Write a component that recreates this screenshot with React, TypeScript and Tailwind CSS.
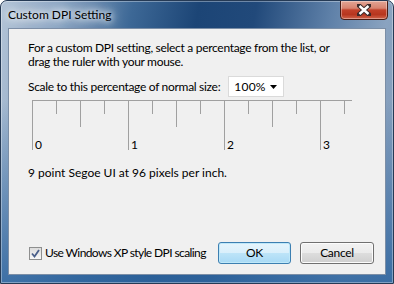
import React from "react";

const font = { fontFamily: 'Lato, "Noto Sans", sans-serif' };

function Ruler() {
  const ticks = Array.from({ length: 14 }, (_, i) => i);
  return (
    <svg width="330" height="52" className="block" style={font}>
      <line x1="0" y1="0.5" x2="320" y2="0.5" stroke="#a0a0a0" />
      {ticks.map((i) => {
        const x = 24 * i + 0.5;
        const h = i % 4 === 0 ? 50 : i % 4 === 2 ? 27 : 14;
        return <line key={i} x1={x} y1="0" x2={x} y2={h} stroke="#a0a0a0" />;
      })}
      {[0, 1, 2, 3].map((n) => (
        <text key={n} x={96 * n + 3} y="49" fontSize="12" fill="#000">
          {n}
        </text>
      ))}
    </svg>
  );
}

export default function App() {
  return (
    <div
      className="relative w-[394px] h-[284px] overflow-hidden rounded-t-[7px] border border-[#253a55] bg-[linear-gradient(to_bottom,rgba(47,102,160,0)_35%,rgba(47,102,160,0.85)_100%),linear-gradient(100deg,#b3c4d7_0%,#8ba5c3_14%,#3d6896_30%,#1c4576_45%,#21497a_58%,#5e80a8_75%,#8aa3c0_88%,#7e98b8_100%)]"
      style={font}
    >
      <div className="pointer-events-none absolute inset-0 rounded-t-[6px] border border-[rgba(255,255,255,0.35)]" />
      {/* title bar */}
      <div className="relative flex h-[27px] items-center pl-[7px]">
        <span className="relative whitespace-nowrap text-[12px] leading-none text-black [text-shadow:0_0_6px_#fff,0_0_10px_#fff,0_0_14px_#e8eef5]">
          Custom DPI Setting
        </span>
        {/* close button */}
        <div className="absolute right-[5px] top-[-1px] flex h-[20px] w-[48px] items-center justify-center rounded-b-[4px] border border-[#4a1c14] bg-[linear-gradient(to_bottom,#e3a595_0%,#d8836f_40%,#c2412a_50%,#b7361f_75%,#d0644b_100%)] shadow-[inset_0_0_0_1px_rgba(255,255,255,0.35)]">
          <svg width="14" height="12" viewBox="0 0 14 12">
            <path
              d="M2 1.5 L12 10.5 M12 1.5 L2 10.5"
              stroke="#3b2a2a"
              strokeWidth="4.5"
              strokeLinecap="square"
            />
            <path
              d="M2.5 2 L11.5 10 M11.5 2 L2.5 10"
              stroke="#fff"
              strokeWidth="2.4"
              strokeLinecap="butt"
            />
          </svg>
        </div>
      </div>
      {/* client */}
      <div className="ml-[7px] flex h-[247px] w-[378px] flex-col border border-[#7b8ea6] bg-[#f0f0f0] pl-[19px] pr-[11px] pt-[12px] pb-[10px] text-[12px] tracking-[-0.3px] text-black">
        <div className="whitespace-nowrap leading-[14px]">
          For a custom DPI setting, select a percentage from the list, or
          <br />
          drag the ruler with your mouse.
        </div>
        <div className="mt-[7px] flex h-[21px] items-center whitespace-nowrap">
          <span>Scale to this percentage of normal size:</span>
          <div className="ml-[8px] flex h-[21px] w-[56px] shrink-0 items-center border border-[#dadada] bg-white pl-[5px]">
            <span className="tracking-[0.2px]">100%</span>
            <svg width="7" height="4" className="ml-auto mr-[6px]">
              <path d="M0 0 L7 0 L3.5 4 Z" fill="#000" />
            </svg>
          </div>
        </div>
        <div className="ml-[4px] mt-[3px]">
          <Ruler />
        </div>
        <div className="mt-[14px] whitespace-nowrap leading-[14px] tracking-[0px]">
          9 point Segoe UI at 96 pixels per inch.
        </div>
        <div className="mt-auto flex items-center">
          <div className="flex items-center whitespace-nowrap">
            <div className="ml-[1px] flex h-[13px] w-[13px] shrink-0 items-center justify-center border border-[#8e8f8f] bg-[linear-gradient(to_bottom,#dcdcdc,#f8f8f8)]">
              <svg width="9" height="9" viewBox="0 0 9 9">
                <path d="M1 4.5 L3.5 7.5 L8 1" stroke="#4a5f8a" strokeWidth="1.8" fill="none" />
              </svg>
            </div>
            <span className="ml-[3px] tracking-[-0.6px]">Use Windows XP style DPI scaling</span>
          </div>
          <div className="ml-auto flex gap-[9px]">
            <button className="flex h-[22px] w-[73px] items-center justify-center rounded-[3px] border border-[#3c7fb1] bg-[linear-gradient(to_bottom,#e5f4fc_0%,#d9effb_50%,#bde4f8_51%,#a7d9f5_100%)] text-[12px] shadow-[inset_0_0_0_1px_#bfe8f9]">
              OK
            </button>
            <button className="flex h-[22px] w-[74px] items-center justify-center rounded-[3px] border border-[#707070] bg-[linear-gradient(to_bottom,#f2f2f2_0%,#ebebeb_50%,#dddddd_51%,#cfcfcf_100%)] text-[12px] shadow-[inset_0_0_0_1px_#fcfcfc]">
              Cancel
            </button>
          </div>
        </div>
      </div>
    </div>
  );
}
